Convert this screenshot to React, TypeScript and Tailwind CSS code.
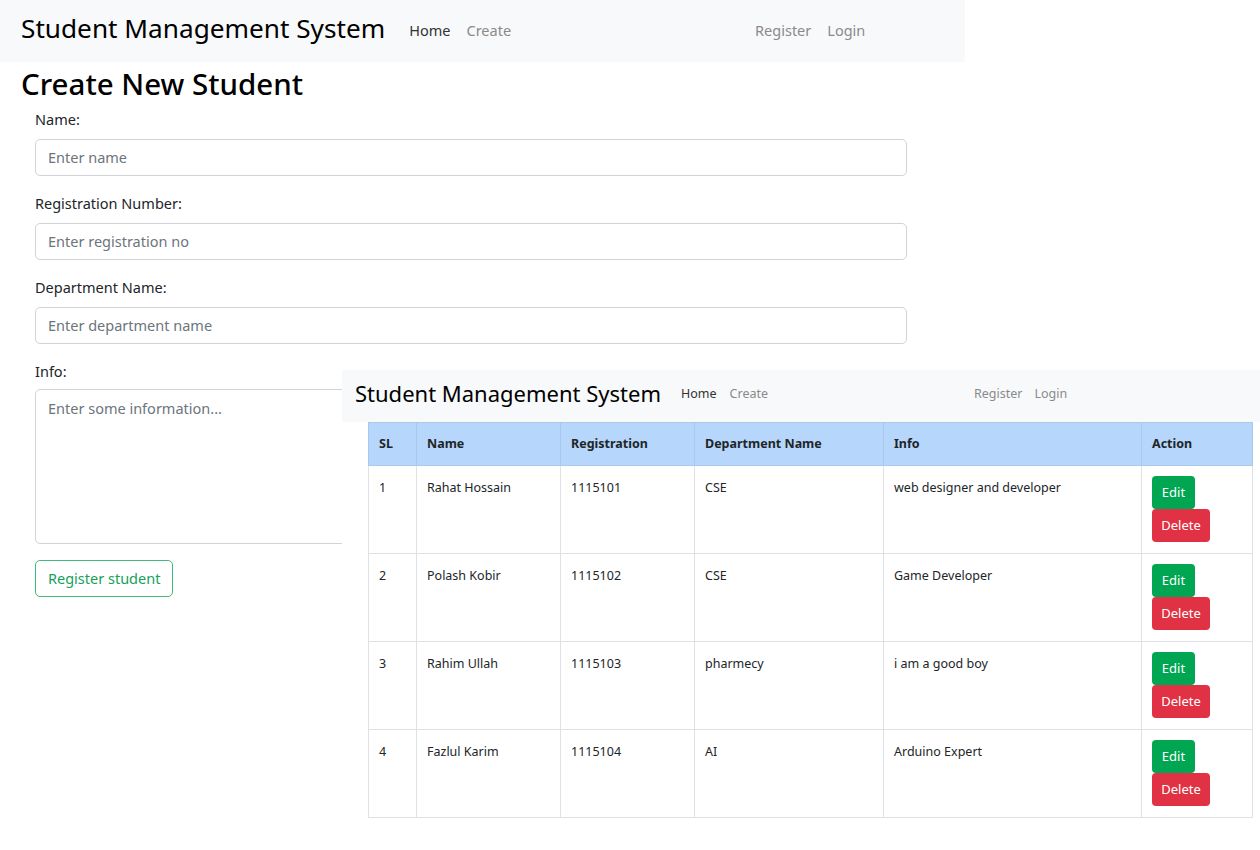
const students = [
  { sl: 1, name: 'Rahat Hossain', reg: '1115101', dept: 'CSE', info: 'web designer and developer' },
  { sl: 2, name: 'Polash Kobir', reg: '1115102', dept: 'CSE', info: 'Game Developer' },
  { sl: 3, name: 'Rahim Ullah', reg: '1115103', dept: 'pharmecy', info: 'i am a good boy' },
  { sl: 4, name: 'Fazlul Karim', reg: '1115104', dept: 'AI', info: 'Arduino Expert' },
]

const fields = [
  { label: 'Name:', placeholder: 'Enter name' },
  { label: 'Registration Number:', placeholder: 'Enter registration no' },
  { label: 'Department Name:', placeholder: 'Enter department name' },
]

function CreatePage() {
  return (
    <div className="w-[965px]">
      {/* Navbar */}
      <nav className="flex h-[62px] items-center bg-[#f8f9fa] pb-[5px] pl-[21px]">
        <span className="text-[26.2px] leading-none text-[#000]">Student Management System</span>
        <div className="ml-[24px] flex gap-[16px] pt-[4px] text-[14.5px] text-[#333]">
          <span>Home</span>
          <span className="text-[#8a8a8a]">Create</span>
        </div>
        <div className="ml-[244px] flex gap-[16px] pt-[4px] text-[14.5px] text-[#8a8a8a]">
          <span>Register</span>
          <span>Login</span>
        </div>
      </nav>

      <h1 className="mt-[3px] pl-[21px] text-[29.5px] font-medium leading-[38px] text-[#000]">
        Create New Student
      </h1>

      <form className="w-[872px] pl-[35px] pt-[6px] box-content">
        {fields.map((f) => (
          <div key={f.label} className="mb-[17px]">
            <label className="block text-[14.5px] leading-[20px] text-[#212529]">{f.label}</label>
            <div className="mt-[10px] flex h-[37px] items-center rounded-[5px] border border-[#ced4da] px-[12px] text-[14.5px] text-[#6c757d]">
              {f.placeholder}
            </div>
          </div>
        ))}
        <div className="mb-[16px]">
          <label className="block text-[14.5px] leading-[20px] text-[#212529]">Info:</label>
          <div className="mt-[8px] h-[155px] rounded-[5px] border border-[#ced4da] px-[12px] pt-[8px] text-[14.5px] text-[#6c757d]">
            Enter some information...
          </div>
        </div>
        <button
          type="button"
          className="h-[37px] rounded-[5px] border border-[#3fb97c] px-[12px] text-[14.5px] text-[#16a05a]"
        >
          Register student
        </button>
      </form>
    </div>
  )
}

function ListPage() {
  return (
    <div className="h-[480px] w-[918px] bg-white">
      <nav className="flex h-[52px] items-center bg-[#f8f9fa] pb-[7px] pl-[13px]">
        <span className="text-[22px] leading-none text-[#000]">Student Management System</span>
        <div className="ml-[20px] flex gap-[13px] pt-[4px] text-[12.5px] text-[#333]">
          <span>Home</span>
          <span className="text-[#8a8a8a]">Create</span>
        </div>
        <div className="ml-[206px] flex gap-[12px] pt-[4px] text-[12.5px] text-[#8a8a8a]">
          <span>Register</span>
          <span>Login</span>
        </div>
      </nav>

      <table className="ml-[26px] w-[885px] border-collapse text-[12.5px] text-[#212529]">
        <thead>
          <tr className="h-[43px] bg-[#b6d7fb] text-left">
            <th className="w-[48px] border border-[#a9c8ea] px-[10px] font-bold">SL</th>
            <th className="w-[144px] border border-[#a9c8ea] px-[10px] font-bold">Name</th>
            <th className="w-[134px] border border-[#a9c8ea] px-[10px] font-bold">Registration</th>
            <th className="w-[189px] border border-[#a9c8ea] px-[10px] font-bold">Department Name</th>
            <th className="w-[258px] border border-[#a9c8ea] px-[10px] font-bold">Info</th>
            <th className="border border-[#a9c8ea] px-[10px] font-bold">Action</th>
          </tr>
        </thead>
        <tbody>
          {students.map((s) => (
            <tr key={s.sl} className="h-[88px] align-top">
              <td className="border border-[#dee2e6] px-[10px] pt-[13px]">{s.sl}</td>
              <td className="border border-[#dee2e6] px-[10px] pt-[13px]">{s.name}</td>
              <td className="border border-[#dee2e6] px-[10px] pt-[13px]">{s.reg}</td>
              <td className="border border-[#dee2e6] px-[10px] pt-[13px]">{s.dept}</td>
              <td className="border border-[#dee2e6] px-[10px] pt-[13px]">{s.info}</td>
              <td className="border border-[#dee2e6] px-[10px] pt-[10px]">
                <div className="flex flex-col items-start">
                  <button type="button" className="h-[33px] w-[43px] rounded-[4px] bg-[#00a651] text-[13px] text-white">
                    Edit
                  </button>
                  <button type="button" className="h-[33px] w-[58px] rounded-[4px] bg-[#e03244] text-[13px] text-white">
                    Delete
                  </button>
                </div>
              </td>
            </tr>
          ))}
        </tbody>
      </table>
    </div>
  )
}

export default function App() {
  return (
    <div className="relative h-[850px] w-[1260px] overflow-hidden bg-white font-['Noto_Sans',sans-serif]">
      <CreatePage />
      {/* second screenshot pasted over the first */}
      <div className="absolute left-[342px] top-[370px]">
        <ListPage />
      </div>
    </div>
  )
}
